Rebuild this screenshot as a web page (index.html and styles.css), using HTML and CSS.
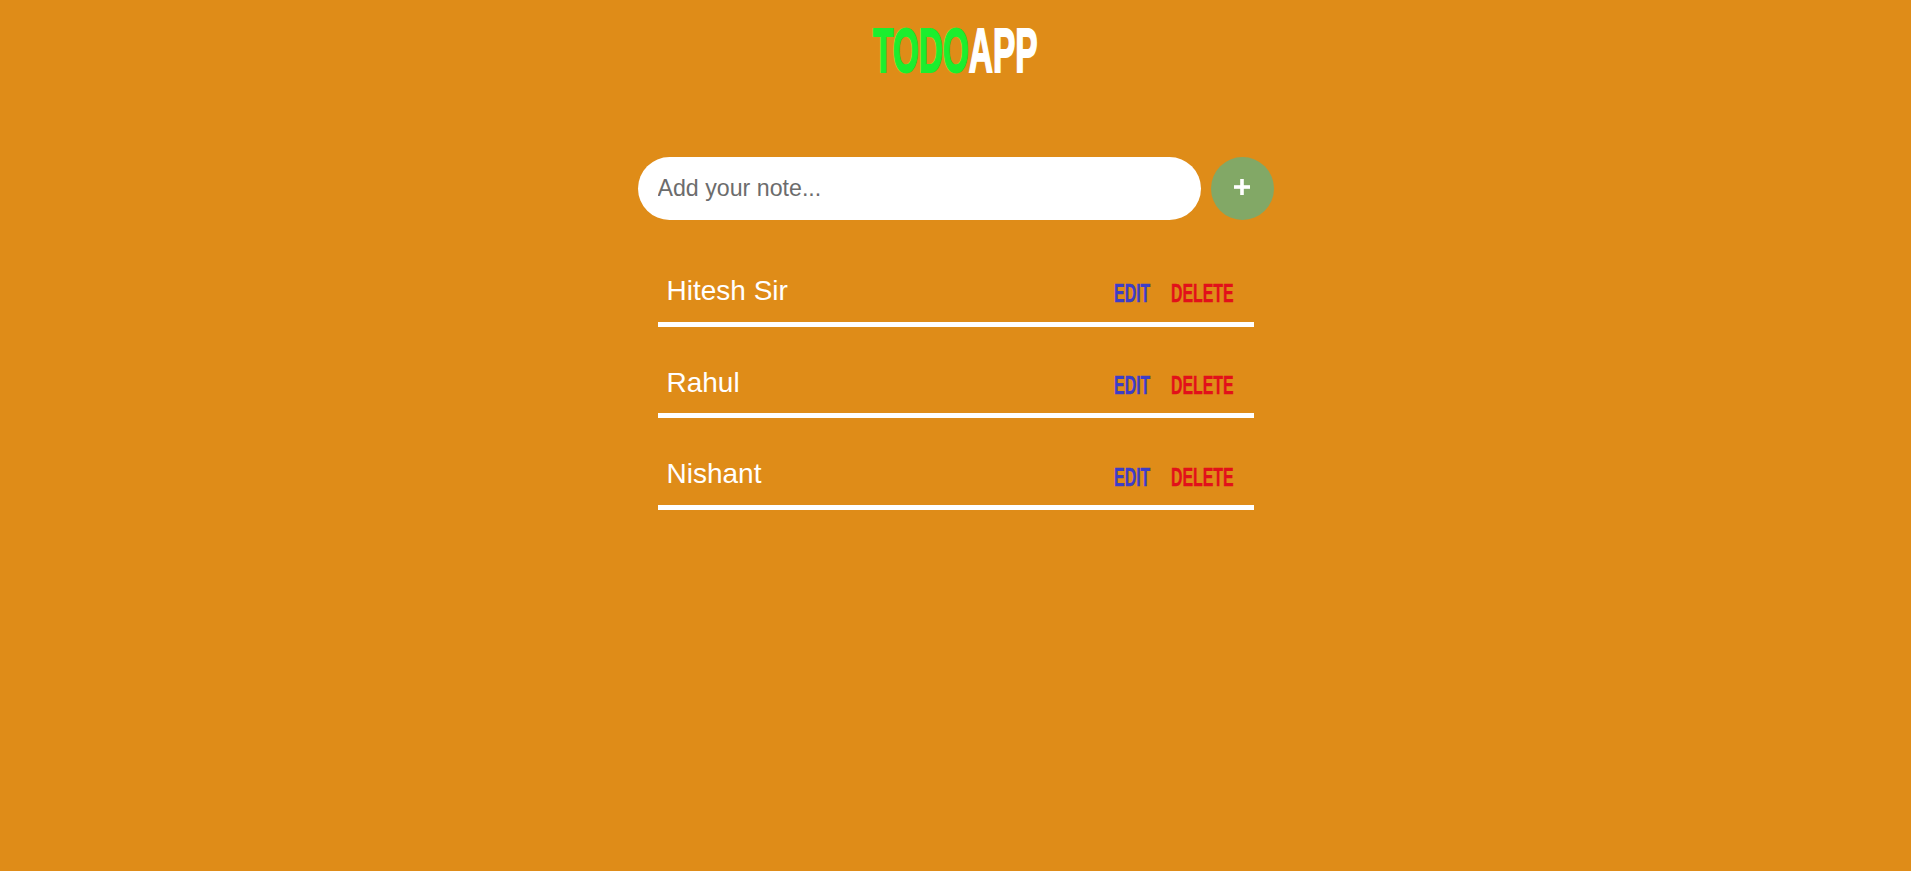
FILE: index.html
```html
<!DOCTYPE html>
<html lang="en">
<head>
<meta charset="utf-8">
<title>Todo App</title>
<link rel="stylesheet" href="styles.css">
</head>
<body>
  <main class="app">
    <h1 class="title"><span class="title-text"><span class="title-todo">TODO</span><span class="title-app">APP</span></span></h1>

    <form class="add-form">
      <input class="note-input" type="text" placeholder="Add your note...">
      <button class="add-btn" type="button" aria-label="Add">
        <svg width="16" height="16" viewBox="0 0 16 16" aria-hidden="true">
          <rect x="0" y="6.2" width="16" height="3.6" fill="#fff"/>
          <rect x="6.2" y="0" width="3.6" height="16" fill="#fff"/>
        </svg>
      </button>
    </form>

    <ul class="todo-list">
      <li class="todo-item">
        <span class="todo-text">Hitesh Sir</span>
        <div class="actions">
          <button class="act act-edit" type="button"><span class="act-label">EDIT</span></button>
          <button class="act act-delete" type="button"><span class="act-label">DELETE</span></button>
        </div>
      </li>
      <li class="todo-item">
        <span class="todo-text">Rahul</span>
        <div class="actions">
          <button class="act act-edit" type="button"><span class="act-label">EDIT</span></button>
          <button class="act act-delete" type="button"><span class="act-label">DELETE</span></button>
        </div>
      </li>
      <li class="todo-item">
        <span class="todo-text">Nishant</span>
        <div class="actions">
          <button class="act act-edit" type="button"><span class="act-label">EDIT</span></button>
          <button class="act act-delete" type="button"><span class="act-label">DELETE</span></button>
        </div>
      </li>
    </ul>
  </main>
</body>
</html>
```

FILE: styles.css
```css
* {
  box-sizing: border-box;
}

html, body {
  margin: 0;
  padding: 0;
}

body {
  background: #df8c18;
  min-height: 100vh;
  font-family: "Liberation Sans", Arial, sans-serif;
}

.app {
  display: flex;
  flex-direction: column;
  align-items: center;
}

.title {
  margin: 19px 0 0;
  font-size: 63px;
  line-height: 63px;
  font-weight: 700;
  display: flex;
  justify-content: center;
}

.title-text {
  display: inline-block;
  transform: scaleX(0.53);
  transform-origin: center;
  white-space: nowrap;
}

.title-todo {
  color: #1bee2e;
  -webkit-text-stroke: 2px #1bee2e;
}

.title-app {
  color: #ffffff;
  -webkit-text-stroke: 2px #ffffff;
}

.add-form {
  margin-top: 75px;
  display: flex;
  align-items: center;
  gap: 10px;
}

.note-input {
  width: 563px;
  height: 63px;
  border: none;
  border-radius: 32px;
  background: #ffffff;
  padding: 0 20px;
  font-family: "Liberation Sans", Arial, sans-serif;
  font-size: 23.2px;
  color: #333;
  outline: none;
}

.note-input::placeholder {
  color: #6c6c6c;
}

.add-btn {
  width: 63px;
  height: 63px;
  border: none;
  border-radius: 50%;
  background: #82a866;
  display: flex;
  align-items: center;
  justify-content: center;
  padding: 0 0 3px;
  cursor: pointer;
}

.todo-list {
  list-style: none;
  margin: 44px 0 0;
  padding: 0;
  width: 596px;
}

.todo-item {
  display: flex;
  align-items: center;
  justify-content: space-between;
  padding: 11px 21px 14.5px 9px;
  border-bottom: 5px solid #ffffff;
  margin-bottom: 29px;
}

.todo-text {
  color: #ffffff;
  font-size: 28px;
  line-height: 32.2px;
}

.actions {
  display: flex;
  gap: 21px;
}

.act {
  border: none;
  background: none;
  padding: 5px 0 0;
  margin: 0;
  height: 32px;
  font-family: "Liberation Sans", Arial, sans-serif;
  font-weight: 700;
  font-size: 26.5px;
  line-height: 27px;
  display: flex;
  justify-content: center;
  cursor: pointer;
}

.act-edit {
  width: 37px;
  color: #3d3dc8;
}

.act-delete {
  width: 61px;
  color: #e2101a;
}

.act-label {
  display: inline-block;
  white-space: nowrap;
  transform: scaleX(0.6);
  transform-origin: center;
  flex: none;
  -webkit-text-stroke: 0.4px currentColor;
}
```
